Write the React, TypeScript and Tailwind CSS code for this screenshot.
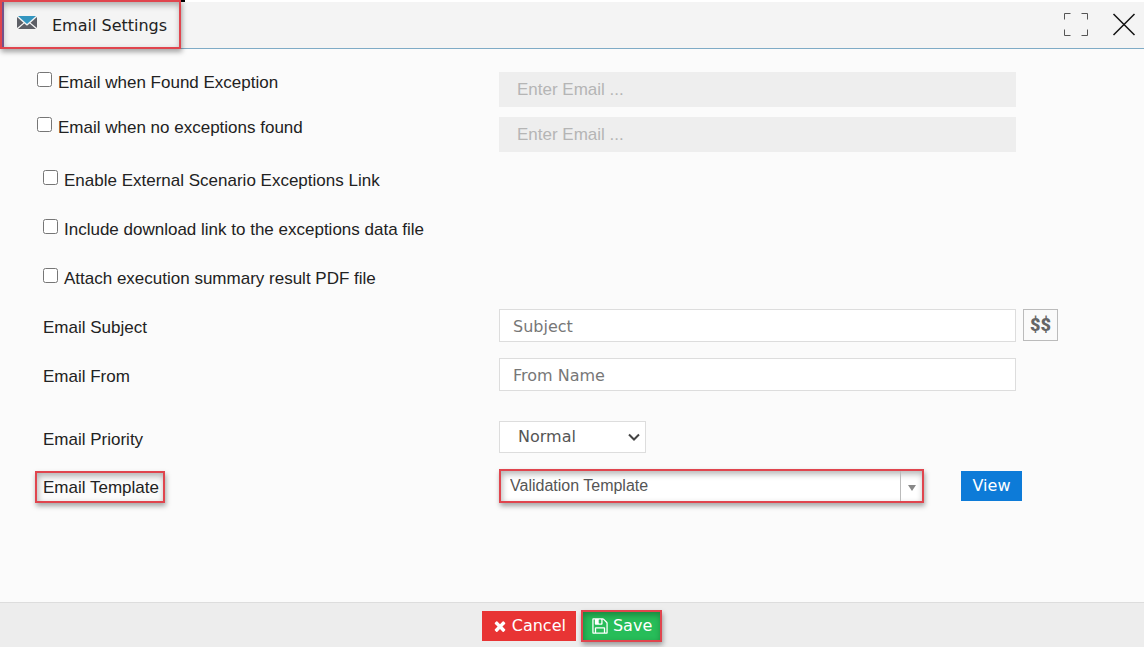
import { useState, type ReactNode } from 'react';
import { clsx } from 'clsx';

const ROW = 'grid grid-cols-[minmax(0,499fr)_minmax(0,517fr)_minmax(0,128fr)] items-start';
const MARKED = 'border-2 border-[#e0454e] shadow-[1px_3px_5px_rgba(0,0,0,0.35),inset_1px_3px_6px_rgba(0,0,0,0.3)]';
const VERDANA = "font-['DejaVu_Sans',Verdana,sans-serif]";

const OPTIONS = [
  { id: 'external-link', label: 'Enable External Scenario Exceptions Link' },
  { id: 'download-link', label: 'Include download link to the exceptions data file' },
  { id: 'attach-pdf', label: 'Attach execution summary result PDF file' },
];

export default function App() {
  const [onFound, setOnFound] = useState(false);
  const [onNone, setOnNone] = useState(false);

  return (
    <div className="flex min-h-screen flex-col bg-[#fbfbfb] font-['Liberation_Sans',Arial,sans-serif] text-base text-[#222]">
      {/* Title bar */}
      <header className="flex h-[49px] items-center justify-between border-t-2 border-b border-t-white border-b-[#7fabc6] bg-[#f4f4f4]">
        <div className={clsx('relative -mt-0.5 -mb-px flex h-[49px] items-center gap-[15px] pr-3 pl-[15px]', MARKED)}>
          <span className="absolute top-0 left-0 h-full w-0.5 bg-[#75508a]" />
          <span className="absolute -top-0.5 left-full ml-0.5 h-0.5 w-1 bg-black" />
          <MailIcon />
          <h1 className={clsx('pt-0.5 text-base whitespace-nowrap', VERDANA)}>Email Settings</h1>
        </div>
        <div className="flex items-center gap-6 pr-2">
          <button type="button" aria-label="Full screen">
            <svg className="size-6" viewBox="0 0 24 24" fill="none" stroke="#555">
              <path d="M.5 6.500V.5h6M17.500.5h6v6M23.500 16.500v6h-6M6.500 22.500h-6v-6" />
            </svg>
          </button>
          <button type="button" aria-label="Close">
            <svg className="size-6" viewBox="0 0 24 24" fill="none" stroke="#111" strokeWidth="1.5">
              <path d="M1.500 1l21 21M22.500 1l-21 21" />
            </svg>
          </button>
        </div>
      </header>

      <main className="flex-1 pt-[21px] pb-8">
        <EmailRow id="found" label="Email when Found Exception" checked={onFound} onChange={setOnFound} />
        <EmailRow id="none" label="Email when no exceptions found" checked={onNone} onChange={setOnNone} />

        <div className="mt-2 mb-[17px] flex flex-col gap-[23px] pl-[43px]">
          {OPTIONS.map((o) => (
            <div key={o.id} className="flex items-start gap-1.5">
              <Checkbox id={o.id} />
              <label htmlFor={o.id} className="text-[17px] leading-[26px]">{o.label}</label>
            </div>
          ))}
        </div>

        <div className={ROW}>
          <FieldLabel htmlFor="subject">Email Subject</FieldLabel>
          <TextField id="subject" placeholder="Subject" />
          <button
            type="button"
            aria-label="Insert variable"
            className="ml-[7px] h-8 w-[35px] border border-[#bbb] bg-[#fafafa] font-[Roboto,sans-serif] text-lg leading-none font-black text-[#666]"
          >
            $$
          </button>
        </div>

        <div className={clsx('mt-[15px]', ROW)}>
          <FieldLabel htmlFor="from">Email From</FieldLabel>
          <TextField id="from" placeholder="From Name" />
        </div>

        <div className={clsx('mt-[29px]', ROW)}>
          <FieldLabel htmlFor="priority">Email Priority</FieldLabel>
          <div className="relative w-[147px]">
            <select
              id="priority"
              className={clsx('h-8 w-full appearance-none border border-[#ddd] bg-white pl-[18px] text-[#555]', VERDANA)}
            >
              <option>Normal</option>
              <option>High</option>
              <option>Low</option>
            </select>
            <svg className="pointer-events-none absolute top-3 right-1.5 h-2 w-3" viewBox="0 0 12 8" fill="none" stroke="#444" strokeWidth="2">
              <path d="M1 1.500l5 5 5-5" />
            </svg>
          </div>
        </div>

        <div className={clsx('mt-3.5', ROW)}>
          <FieldLabel htmlFor="template" marked>Email Template</FieldLabel>
          <div className="col-span-2 flex items-center gap-[37px]">
            <div className={clsx('relative flex h-[34px] w-[425px] bg-white', MARKED)}>
              <select id="template" className="w-full appearance-none bg-transparent pr-7 pl-[9px] text-[#555]">
                <option>Validation Template</option>
              </select>
              <span className="pointer-events-none absolute inset-y-0 right-0 flex w-[22px] items-center justify-center border-l border-[#bbb]">
                <svg className="mt-1 h-1.5 w-2" viewBox="0 0 8 6" fill="#888">
                  <path d="M0 0h8L4 6z" />
                </svg>
              </span>
            </div>
            <button type="button" className={clsx('h-[30px] w-[61px] bg-[#0d7bd8] text-white', VERDANA)}>
              View
            </button>
          </div>
        </div>
      </main>

      <footer className={clsx('flex h-[45px] items-center justify-center gap-[5px] border-t border-[#ddd] bg-[#ededed] pt-0.5 text-white', VERDANA)}>
        <button type="button" className="flex h-[30px] items-center gap-1 bg-[#e83434] px-2.5">
          <svg className="size-4" viewBox="0 0 1792 1792" fill="currentColor">
            <path d="M1490 1322q0 40-28 68l-136 136q-28 28-68 28t-68-28l-294-294-294 294q-28 28-68 28t-68-28l-136-136q-28-28-28-68t28-68l294-294-294-294q-28-28-28-68t28-68l136-136q28-28 68-28t68 28l294 294 294-294q28-28 68-28t68 28l136 136q28 28 28 68t-28 68l-294 294 294 294q28 28 28 68z" />
          </svg>
          Cancel
        </button>
        <button type="button" className={clsx('flex h-8 items-center gap-1 bg-[#27bd59] px-2', MARKED)}>
          <svg className="size-[18px]" viewBox="0 0 1792 1792" fill="currentColor">
            <path d="M512 1536h768v-384h-768v384zm896 0h128v-896q0-14-10-38.500t-20-34.500l-281-281q-10-10-34-20t-39-10v416q0 40-28 68t-68 28h-576q-40 0-68-28t-28-68v-416h-128v1280h128v-416q0-40 28-68t68-28h832q40 0 68 28t28 68v416zm-384-928v-320q0-13-9.500-22.500t-22.500-9.500h-192q-13 0-22.500 9.500t-9.500 22.500v320q0 13 9.500 22.500t22.500 9.500h192q13 0 22.500-9.500t9.500-22.500zm640 32v928q0 40-28 68t-68 28h-1344q-40 0-68-28t-28-68v-1344q0-40 28-68t68-28h928q40 0 88 20t76 48l280 280q28 28 48 76t20 88z" />
          </svg>
          Save
        </button>
      </footer>
    </div>
  );
}

type EmailRowProps = {
  id: string;
  label: string;
  checked: boolean;
  onChange: (checked: boolean) => void;
};

function EmailRow({ id, label, checked, onChange }: EmailRowProps) {
  return (
    <div className={clsx('h-[45px]', ROW)}>
      <div className="flex items-start gap-1.5 pl-[37px]">
        <Checkbox id={id} checked={checked} onChange={onChange} />
        <label htmlFor={id} className="text-[17px] leading-[26px]">{label}</label>
      </div>
      <input
        type="text"
        aria-label={`${label} address`}
        placeholder="Enter Email ..."
        disabled={!checked}
        className="mt-0.5 h-[35px] w-full bg-[#eee] px-[18px] text-[17px] placeholder:text-[#b5b5b5]"
      />
    </div>
  );
}

function Checkbox({ id, checked, onChange }: { id: string; checked?: boolean; onChange?: (checked: boolean) => void }) {
  return (
    <input
      id={id}
      type="checkbox"
      checked={checked}
      onChange={(e) => onChange?.(e.target.checked)}
      className="mt-0.5 size-[15px] shrink-0"
    />
  );
}

function FieldLabel({ htmlFor, marked, children }: { htmlFor: string; marked?: boolean; children: ReactNode }) {
  return (
    <div className="pt-0.5 pl-[35px]">
      <label
        htmlFor={htmlFor}
        className={clsx('flex h-8 w-fit items-center pt-0.5 pr-1 pl-1.5 text-[17px]', marked ? MARKED : 'border-2 border-transparent')}
      >
        {children}
      </label>
    </div>
  );
}

function TextField({ id, placeholder }: { id: string; placeholder: string }) {
  return (
    <input
      id={id}
      type="text"
      placeholder={placeholder}
      className={clsx('h-[33px] w-full border border-[#ddd] bg-white px-[13px] pt-0.5 placeholder:text-[#777]', VERDANA)}
    />
  );
}

function MailIcon() {
  return (
    <svg className="mb-1 h-[13px] w-5 shrink-0" viewBox="0 0 20 13">
      <path d="M1 0h18l-9 8z" fill="#3496c0" />
      <path d="M0 1l6.500 5.700L0 12zM20 1l-6.500 5.700L20 12z" fill="#5d5f66" />
      <path d="M7.300 7.400L10 9.700l2.700-2.300L19 13H1z" fill="#5d5f66" />
    </svg>
  );
}
